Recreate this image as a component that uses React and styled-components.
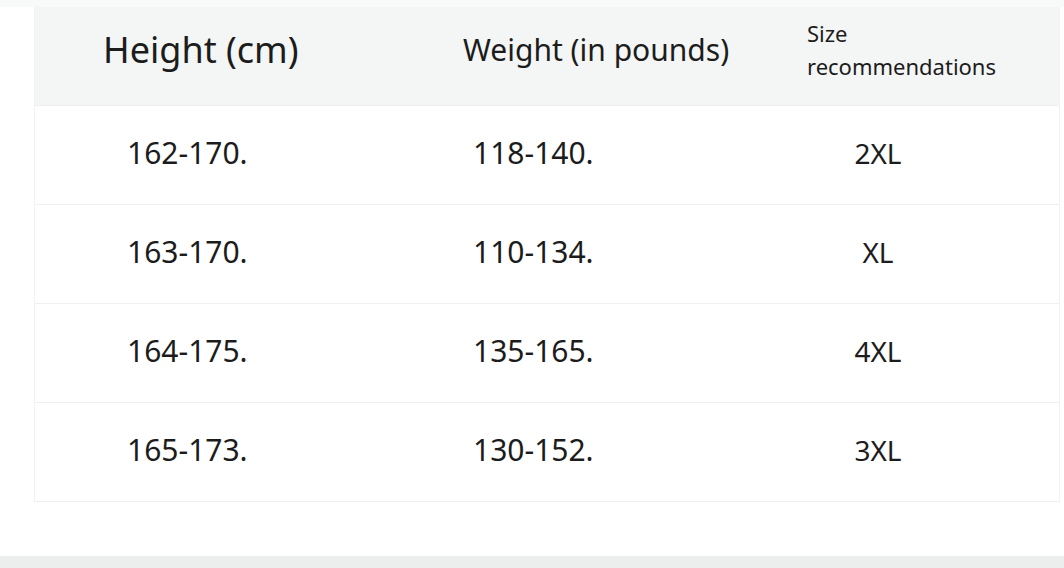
import React from 'react';
import styled, {createGlobalStyle} from 'styled-components';

const rows = [
    {height: '162-170.', weight: '118-140.', size: '2XL'},
    {height: '163-170.', weight: '110-134.', size: 'XL'},
    {height: '164-175.', weight: '135-165.', size: '4XL'},
    {height: '165-173.', weight: '130-152.', size: '3XL'},
];

const App = () => {
    return (
        <>
        <GlobalStyle />
        <Page>
            <TopStrip />
            <Table>
                <HeaderRow>
                    <HeadCell pad={68} size={36}>Height (cm)</HeadCell>
                    <HeadCell pad={35} size={30}>Weight (in pounds)</HeadCell>
                    <HeadCell pad={39} size={22} small>
                        Size<br />recommendations
                    </HeadCell>
                </HeaderRow>
                {rows.map(row => (
                    <Row key={row.height}>
                        <Cell pad={92}>{row.height}</Cell>
                        <Cell pad={45}>{row.weight}</Cell>
                        <SizeCell>{row.size}</SizeCell>
                    </Row>
                ))}
            </Table>
            <Spacer />
            <BottomBar />
        </Page>
        </>
    );
};

const GlobalStyle = createGlobalStyle`
    body {
        margin: 0;
        background: #fff;
        font-family: "Noto Sans", "Open Sans", sans-serif;
        color: #1f1f1f;
    }
`;

const Page = styled.div`
    display: flex;
    flex-direction: column;
    width: 1064px;
    height: 568px;
    overflow: hidden;
`;

const TopStrip = styled.div`
    height: 7px;
    background: #f8f9f9;
`;

const Table = styled.div`
    margin-left: 34px;
    width: 1024px;
    border-left: 1px solid #f1f2f2;
    border-right: 1px solid #f1f2f2;
    border-bottom: 1px solid #eeefef;
`;

const HeaderRow = styled.div`
    display: grid;
    grid-template-columns: 393px 340px 1fr;
    height: 98px;
    background: #f4f5f5;
`;

const HeadCell = styled.div`
    display: flex;
    align-items: center;
    padding-left: ${p => p.pad}px;
    padding-bottom: ${p => p.small ? '12px' : '14px'};
    padding-top: ${p => p.small ? '0' : '2px'};
    font-size: ${p => p.size}px;
    line-height: ${p => p.small ? '33px' : '1.2'};
    color: #1c1c1c;
`;

const Row = styled.div`
    display: grid;
    grid-template-columns: 393px 340px 220px 1fr;
    height: 99px;
    padding-bottom: 5px;
    box-sizing: border-box;
    border-top: 1px solid #eeefef;
    align-items: center;
`;

const Cell = styled.div`
    padding-left: ${p => p.pad}px;
    font-size: 30px;
    color: #1c1c1c;
`;

const SizeCell = styled.div`
    text-align: center;
    font-size: 28px;
    color: #1c1c1c;
`;

const Spacer = styled.div`
    flex: 1;
`;

const BottomBar = styled.div`
    height: 12px;
    background: #eceeee;
`;

export default App;
